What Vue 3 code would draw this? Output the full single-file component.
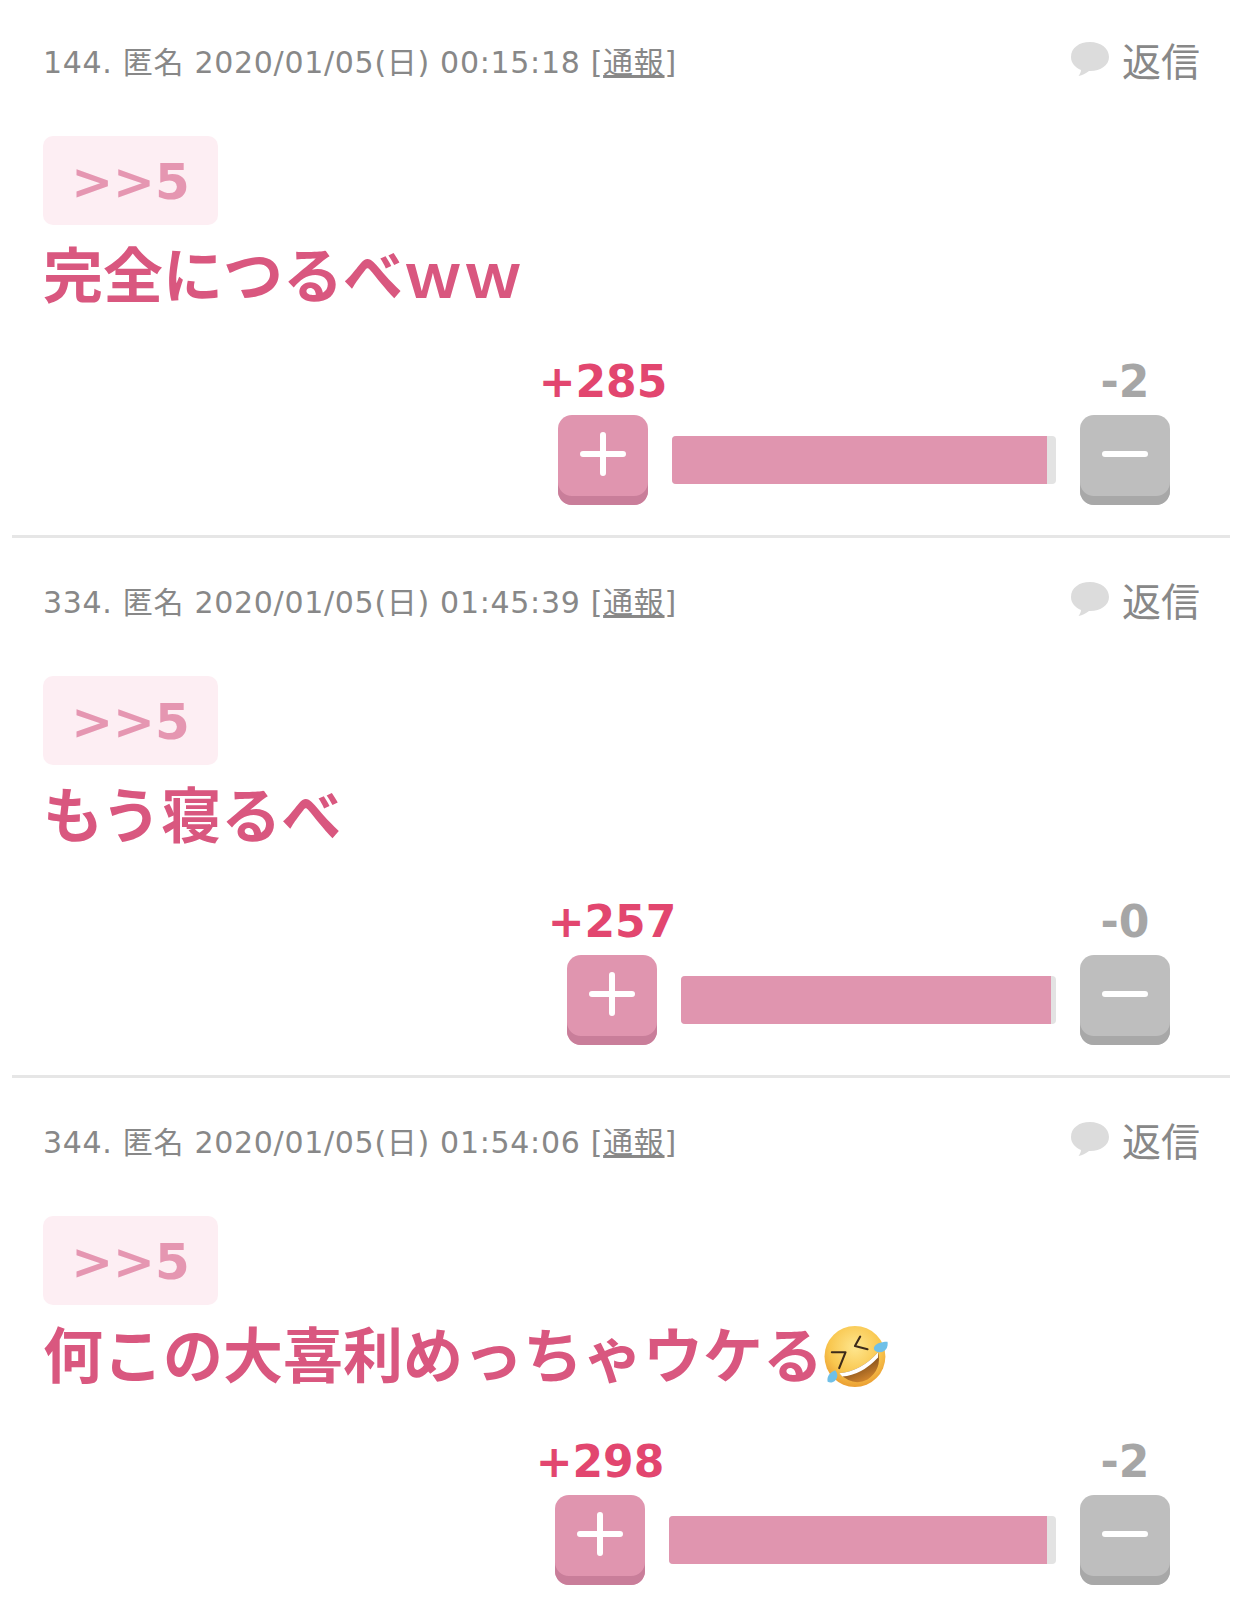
<template>
  <div class="thread">
    <article v-for="res in comments" :key="res.no" class="res">
      <header class="res-head">
        <p class="meta">{{ res.no }}. 匿名 {{ res.date }} [<a class="report">通報</a>]</p>
        <a class="reply">
          <svg class="bubble" width="40" height="36" viewBox="0 0 40 36">
            <path d="M20 1C9 1 1 7 1 16c0 6 4 10.500 10 13 0 2-1 4-2.500 6 4-.5 8-3 10.500-5 11 .5 20-5.500 20-14S31 1 20 1z" fill="#dcdcdc" />
          </svg>
          <span>返信</span>
        </a>
      </header>

      <div class="anchor">&gt;&gt;5</div>
      <p class="body">
        {{ res.text }}
        <svg v-if="res.emoji" class="emoji" width="66" height="63" viewBox="0 0 62 60">
          <defs>
            <radialGradient id="face" cx="50%" cy="35%" r="70%">
              <stop offset="0" stop-color="#fee68e" />
              <stop offset="0.6" stop-color="#f9c74f" />
              <stop offset="1" stop-color="#e8962c" />
            </radialGradient>
            <linearGradient id="mouth" x1="0.3" y1="0.3" x2="0.7" y2="1">
              <stop offset="0" stop-color="#6b3f17" />
              <stop offset="1" stop-color="#d98a2e" />
            </linearGradient>
          </defs>
          <circle cx="30" cy="30" r="29" fill="url(#face)" />
          <path d="M15 46 Q36 44 52 26 Q56 42 42 52 Q28 59 15 46z" fill="url(#mouth)" />
          <path d="M15 46 Q36 44 52 26 L52 31 Q36 48 18 49z" fill="#fff" />
          <path d="M35 11 L30 20 L42 23" stroke="#3d2b1a" stroke-width="2" fill="none" stroke-linecap="round" stroke-linejoin="round" />
          <path d="M8 26 L21 26 L15 41" stroke="#3d2b1a" stroke-width="2" fill="none" stroke-linecap="round" stroke-linejoin="round" />
          <path d="M48 22 C49 18 54 16 61 16 C62 21 59 26 54 26 C51 26 48 25 48 22z" fill="#6fc0e8" />
          <path d="M4 54 C3 49 6 45 11 43 C14 46 14 50 11 53 C9 55 6 55 4 54z" fill="#6fc0e8" />
        </svg>
      </p>

      <div class="votes">
        <div class="vote plus">
          <span class="count">+{{ res.plus }}</span>
          <button class="btn">
            <svg width="46" height="44" viewBox="0 0 46 44">
              <path d="M3 22H43M23 3V41" stroke="#fff" stroke-width="6" stroke-linecap="round" />
            </svg>
          </button>
        </div>
        <div class="bar" :style="{ width: res.barWidth + 'px' }">
          <div class="bar-fill" :style="{ width: res.fill + '%' }"></div>
        </div>
        <div class="vote minus">
          <span class="count">-{{ res.minus }}</span>
          <button class="btn">
            <svg width="46" height="8" viewBox="0 0 46 8">
              <path d="M3 4H43" stroke="#fff" stroke-width="6" stroke-linecap="round" />
            </svg>
          </button>
        </div>
      </div>
    </article>
  </div>
</template>

<script setup>
const comments = [
  { no: 144, date: '2020/01/05(日) 00:15:18', text: '完全につるべｗｗ', plus: 285, minus: 2, barWidth: 384, fill: 97.7, emoji: false },
  { no: 334, date: '2020/01/05(日) 01:45:39', text: 'もう寝るべ', plus: 257, minus: 0, barWidth: 375, fill: 98.6, emoji: false },
  { no: 344, date: '2020/01/05(日) 01:54:06', text: '何この大喜利めっちゃウケる', plus: 298, minus: 2, barWidth: 387, fill: 97.7, emoji: true }
]
</script>

<style>
html, body {
  background: #fff;
}
</style>

<style scoped>
.thread {
  height: 1603px;
  overflow: hidden;
  font-family: "DejaVu Sans", "Noto Sans CJK JP", sans-serif;
}

.res {
  height: 540px;
  box-sizing: border-box;
  margin: 0 12px;
  padding: 36px 0 0 31px;
  border-bottom: 3px solid #e6e6e6;
}

.res:first-child {
  margin-top: -2px;
}

.res-head {
  display: flex;
  justify-content: space-between;
  align-items: center;
  height: 50px;
  padding-right: 30px;
}

.meta {
  margin: 2px 0 0;
  font-size: 30px;
  letter-spacing: 0.7px;
  color: #888;
  white-space: nowrap;
}

.report {
  text-decoration: underline;
}

.reply {
  display: flex;
  align-items: center;
  gap: 12px;
  font-size: 39px;
  color: #888;
}

.anchor {
  width: 175px;
  height: 89px;
  box-sizing: border-box;
  padding-top: 2px;
  margin-top: 52px;
  display: flex;
  align-items: center;
  justify-content: center;
  border-radius: 10px;
  background: #fdeef3;
  color: #e596b1;
  font-size: 50px;
  font-weight: 700;
}

.body {
  display: flex;
  align-items: center;
  height: 92px;
  margin: 0;
  font-size: 60px;
  font-weight: 700;
  color: #d9577f;
  white-space: nowrap;
}

.emoji {
  margin: 10px 0 0;
}

.votes {
  display: flex;
  justify-content: flex-end;
  align-items: flex-end;
  gap: 24px;
  margin-top: 37px;
  padding-right: 60px;
}

.vote {
  display: flex;
  flex-direction: column;
  align-items: center;
  width: 90px;
}

.count {
  margin-bottom: 5px;
  font-size: 44px;
  font-weight: 700;
  line-height: 56px;
  white-space: nowrap;
}

.plus .count {
  color: #e2466f;
}

.minus .count {
  color: #a6a6a6;
}

.btn {
  display: flex;
  align-items: center;
  justify-content: center;
  width: 90px;
  height: 90px;
  padding: 0 0 12px;
  border: 0;
  border-radius: 14px;
}

.plus .btn {
  background: #e095af;
  box-shadow: inset 0 -9px 0 #c97e9a;
}

.minus .btn {
  background: #bebebe;
  box-shadow: inset 0 -9px 0 #a8a8a8;
}

.bar {
  height: 48px;
  margin-bottom: 21px;
  border-radius: 4px;
  background: #e3e3e3;
  overflow: hidden;
}

.bar-fill {
  height: 100%;
  background: #e095af;
}
</style>
